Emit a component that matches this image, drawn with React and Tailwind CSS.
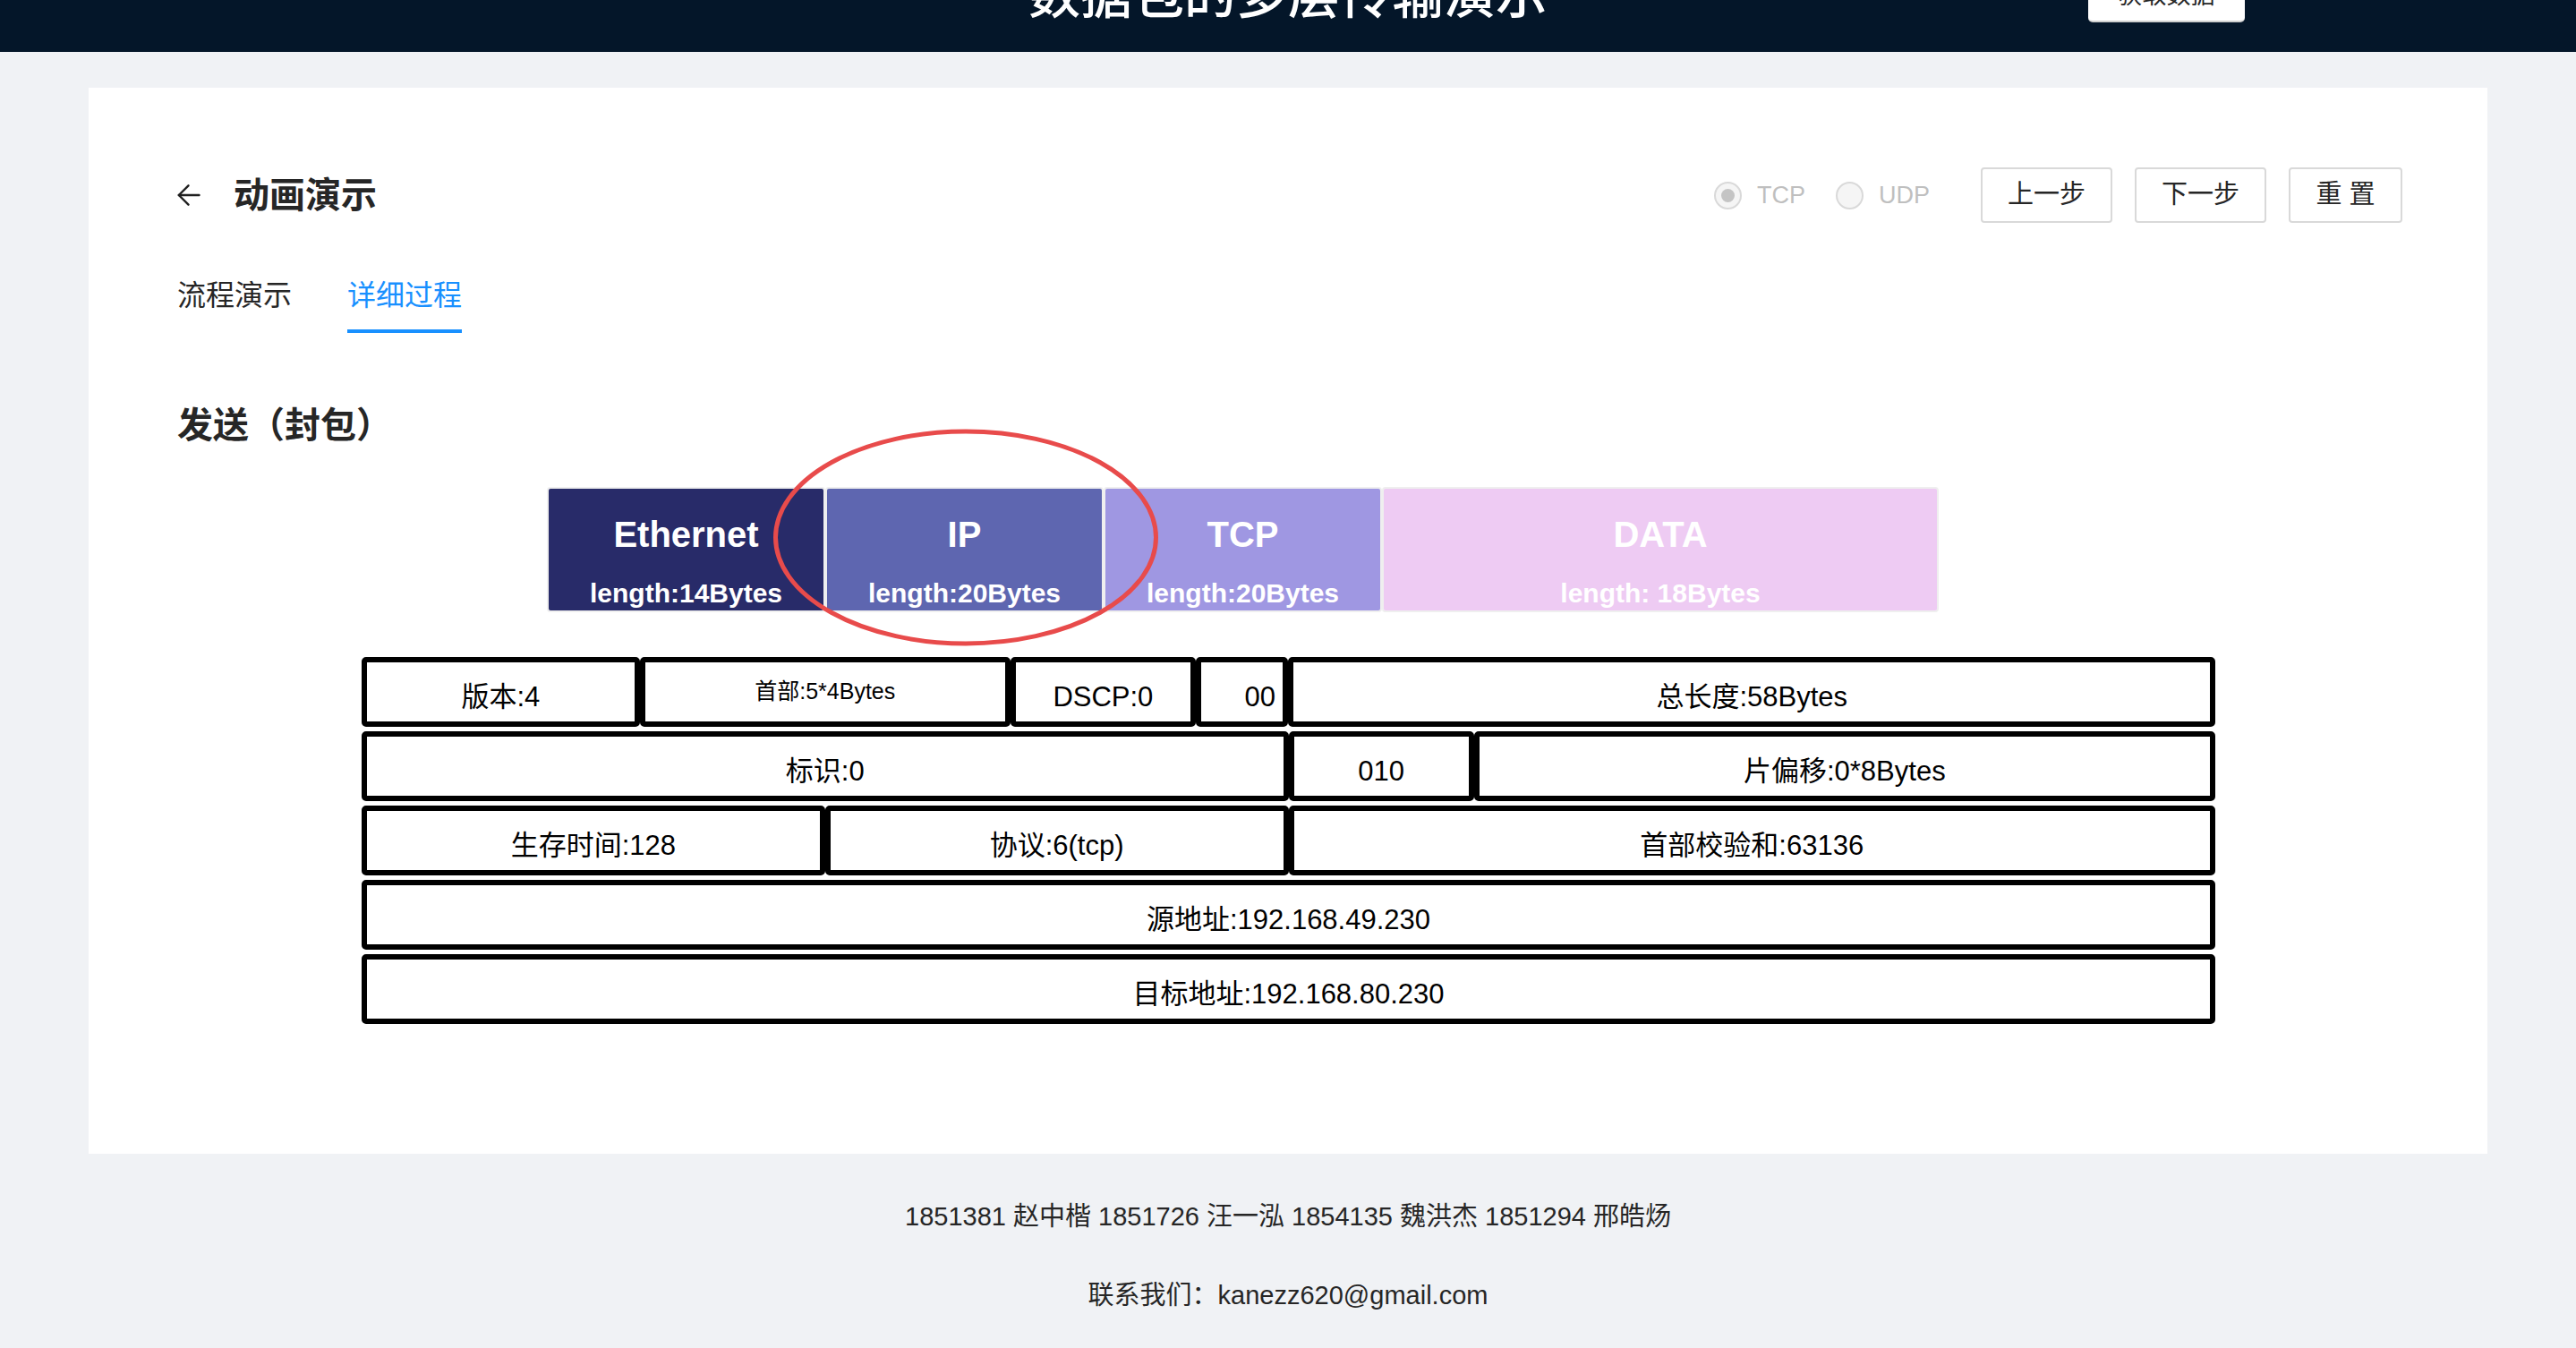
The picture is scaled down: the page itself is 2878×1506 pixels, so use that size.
import React, { useState } from 'react';

const LAYERS = [
  { name: "Ethernet", len: "length:14Bytes", w: "w-[311px]", bg: "bg-[#282b69]" },
  { name: "IP", len: "length:20Bytes", w: "w-[311px]", bg: "bg-[#5e66b0]" },
  { name: "TCP", len: "length:20Bytes", w: "w-[311px]", bg: "bg-[#9f97e2]" },
  { name: "DATA", len: "length: 18Bytes", w: "w-[622px]", bg: "bg-[#eecbf3]" },
];

// ip header rows, widths are share of the row
const IP_ROWS = [
  [
    { text: "版本:4", w: "w-[15%]" },
    { text: "首部:5*4Bytes", w: "w-[20%]", small: true },
    { text: "DSCP:0", w: "w-[10%]" },
    { text: "00", w: "w-[5%] pl-[40px]" },
    { text: "总长度:58Bytes", w: "w-[50%]" },
  ],
  [
    { text: "标识:0", w: "w-[50%]" },
    { text: "010", w: "w-[10%]" },
    { text: "片偏移:0*8Bytes", w: "w-[40%]" },
  ],
  [
    { text: "生存时间:128", w: "w-[25%]" },
    { text: "协议:6(tcp)", w: "w-[25%]" },
    { text: "首部校验和:63136", w: "w-[50%]" },
  ],
  [{ text: "源地址:192.168.49.230", w: "w-full" }],
  [{ text: "目标地址:192.168.80.230", w: "w-full" }],
];

const Radio = ({ label, checked }) => (
  <label className="flex items-center gap-[17px] cursor-not-allowed">
    <span className="w-[31px] h-[31px] rounded-full border-2 border-[#d9d9d9] bg-[#f5f5f5] flex items-center justify-center">
      {checked && <span className="w-[15px] h-[15px] rounded-full bg-[#c4c4c4]" />}
    </span>
    <span className="text-[27px] text-[#bfbfbf]">{label}</span>
  </label>
);

const StepButton = ({ children, className = "" }) => (
  <button className={"h-[62px] border-2 border-[#d9d9d9] rounded-[4px] bg-white text-[29px] text-[#262626] " + className}>
    {children}
  </button>
);

const App = () => {
  const [tab, setTab] = useState(1);

  return (
    <div className="min-h-screen bg-[#f0f2f5] font-['Liberation_Sans','Noto_Sans_CJK_SC',sans-serif] text-[#262626]">
      <div className="h-[58px] bg-[#041629] overflow-hidden grid grid-cols-[1fr_auto_1fr] items-start">
        <div />
        <h1 className="mt-[-34px] text-[58px] leading-[58px] font-medium text-white whitespace-nowrap">数据包的多层传输演示</h1>
        <div className="pl-[604px] flex items-start">
          <button className="mt-[-33px] h-[58px] w-[175px] shrink-0 bg-white rounded-b-[5px] border-b-2 border-[#cfcfcf] text-[27px] leading-[30px] text-[#262626]">
            获取数据
          </button>
        </div>
      </div>

      <div className="px-[99px] pt-[40px]">
        <div className="bg-white pl-[99px] pr-[95px] pt-[89px] pb-[145px]">
          {/* header row */}
          <div className="h-[62px] flex items-center justify-between">
            <div className="flex items-center gap-[37px]">
              <svg width="26" height="26" viewBox="0 0 26 26" fill="none" stroke="#1f1f1f" strokeWidth="2.4" strokeLinecap="round" strokeLinejoin="round">
                <path d="M24.5 13H1.8" />
                <path d="M12.5 2.3L1.8 13l10.7 10.7" />
              </svg>
              <span className="text-[40px] leading-[56px] font-bold text-[#262626]">动画演示</span>
            </div>
            <div className="flex items-center">
              <div className="flex items-center gap-[34px] mr-[57px]">
                <Radio label="TCP" checked />
                <Radio label="UDP" />
              </div>
              <div className="flex items-center gap-[25px]">
                <StepButton className="w-[147px]">上一步</StepButton>
                <StepButton className="w-[147px]">下一步</StepButton>
                <StepButton className="w-[127px]">重 置</StepButton>
              </div>
            </div>
          </div>

          {/* tabs */}
          <div className="mt-[59px] flex gap-[62px]">
            {["流程演示", "详细过程"].map((t, i) => (
              <div key={t} onClick={() => setTab(i)} className="flex flex-col cursor-pointer">
                <span className={"text-[32px] leading-[44px] pb-[16px] " + (tab === i ? "text-[#1890ff]" : "text-[#262626]")}>{t}</span>
                <span className={"h-[4px] " + (tab === i ? "bg-[#1890ff]" : "bg-transparent")} />
              </div>
            ))}
          </div>

          <h2 className="mt-[75px] text-[40px] leading-[56px] font-bold text-[#262626]">发送（封包）</h2>

          {/* layer bar */}
          <div className="mt-[41px] ml-[413px] w-[1555px] relative">
            <div className="flex">
              {LAYERS.map((l) => (
                <div key={l.name} className={"h-[140px] border-2 border-[#efefef] rounded-[4px] flex flex-col items-center text-white font-bold " + l.w + " " + l.bg}>
                  <span className="mt-[27px] text-[40px] leading-[48px]">{l.name}</span>
                  <span className="mt-[24px] text-[30px] leading-[36px]">{l.len}</span>
                </div>
              ))}
            </div>
            <svg className="absolute left-[252px] top-[-65px] pointer-events-none" width="432" height="243" viewBox="0 0 432 243">
              <ellipse cx="216" cy="121.5" rx="212.5" ry="118.5" fill="none" stroke="#e84b4b" strokeWidth="5" />
            </svg>
          </div>

          {/* ip header table */}
          <div className="mt-[50px] ml-[206px] w-[2071px] flex flex-col gap-[5px] text-black">
            {IP_ROWS.map((row, r) => (
              <div key={r} className="flex">
                {row.map((c) => (
                  <div key={c.text} className={"h-[78px] border-[6px] border-black rounded-[5px] flex items-center justify-center " + c.w}>
                    <span className={c.small ? "text-[25px]" : "text-[31px] mt-[12px]"}>{c.text}</span>
                  </div>
                ))}
              </div>
            ))}
          </div>
        </div>
      </div>

      {/* footer */}
      <div className="pt-[50px] pb-[60px] flex flex-col items-center gap-[48px] text-[29px] leading-[40px] text-[#262626]">
        <p>1851381 赵中楷 1851726 汪一泓 1854135 魏洪杰 1851294 邢皓炀</p>
        <p>联系我们：kanezz620@gmail.com</p>
      </div>
    </div>
  );
};

export default App;
